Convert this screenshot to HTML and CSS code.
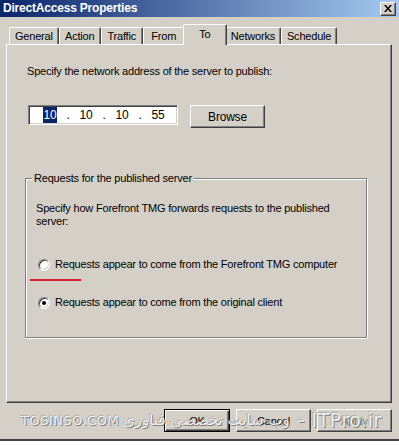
FILE: index.html
```html
<!DOCTYPE html>
<html lang="en">
<head>
    <meta charset="UTF-8">
    <meta name="viewport" content="width=device-width, initial-scale=1.0">
    <title>DirectAccess Properties</title>
    <link rel="stylesheet" href="styles.css">
</head>
<body>
    <div class="window">
        <div class="titlebar">
            <span class="title">DirectAccess Properties</span>
            <span class="close">
                <svg width="8" height="7" viewBox="0 0 8 7"><path d="M0 0h2l2 2.5L6 0h2L5 3.5 8 7H6L4 4.5 2 7H0l3-3.5z" fill="#000"/></svg>
            </span>
        </div>

        <ul class="tabs">
            <li class="tab">General</li>
            <li class="tab">Action</li>
            <li class="tab">Traffic</li>
            <li class="tab">From</li>
            <li class="tab active">To</li>
            <li class="tab">Networks</li>
            <li class="tab">Schedule</li>
        </ul>

        <div class="panel">
            <p class="prompt">Specify the network address of the server to publish:</p>

            <div class="address-row">
                <div class="ip-box">
                    <span class="octet"><span class="selected">10</span></span>
                    <span class="dot">.</span>
                    <span class="octet">10</span>
                    <span class="dot">.</span>
                    <span class="octet">10</span>
                    <span class="dot">.</span>
                    <span class="octet">55</span>
                </div>
                <button class="btn browse">Browse</button>
            </div>

            <div class="group">
                <span class="group-title">Requests for the published server</span>
                <p class="group-text">Specify how Forefront TMG forwards requests to the published<br>server:</p>

                <div class="radio">
                    <span class="radio-circle"></span>
                    <span>Requests appear to come from the Forefront TMG computer</span>
                </div>
                <div class="red-mark"></div>
                <div class="radio">
                    <span class="radio-circle checked"></span>
                    <span>Requests appear to come from the original client</span>
                </div>
            </div>
        </div>

        <div class="buttons">
            <button class="btn ok">OK</button>
            <button class="btn cancel">Cancel</button>
            <button class="btn apply">Apply</button>
        </div>

        <div class="footer"></div>

        <!-- watermark printed over the screenshot -->
        <div class="watermark">
            <span class="wm-site">TOSINSO.COM</span>
            <span class="wm-fa" dir="rtl">وب سایت تخصصی فناوری</span>
            <span class="wm-site big">- ITPro.ir</span>
        </div>
    </div>
</body>
</html>
```

FILE: styles.css
```css
* {
    box-sizing: border-box;
}

body {
    margin: 0;
    font-family: "Liberation Sans", Arial, sans-serif;
    font-size: 11px;
    letter-spacing: -0.2px;
    color: #000;
}

.window {
    position: relative;
    width: 399px;
    height: 446px;
    overflow: hidden;
    background: #d4d0c8;
}

/* title bar */
.titlebar {
    display: flex;
    align-items: center;
    justify-content: space-between;
    height: 17px;
    padding: 0 3px 1px 3px;
    background: linear-gradient(to right, #0a246a, #a6caf0);
}

.title {
    color: #fff;
    font-weight: bold;
    font-size: 12px;
}

.close {
    display: flex;
    align-items: center;
    justify-content: center;
    width: 16px;
    height: 14px;
    margin-top: 1px;
    background: #d4d0c8;
    border: 1px solid;
    border-color: #fff #404040 #404040 #fff;
    box-shadow: inset -1px -1px 0 #808080;
}

/* tabs */
.tabs {
    display: flex;
    align-items: flex-end;
    height: 27px;
    margin: 0;
    padding: 0 0 0 9px;
    list-style-type: none;
}

.tab {
    position: relative;
    min-width: 42px;
    height: 17px;
    padding: 2px 5px 0 5px;
    text-align: center;
    border: 1px solid;
    border-bottom: none;
    border-color: #fff #404040 transparent #fff;
    border-radius: 2px 2px 0 0;
    box-shadow: inset -1px 0 0 #808080;
}

.tab.active {
    z-index: 2;
    height: 21px;
    min-width: 44px;
    margin: 0 -2px -1px -2px;
    padding: 3px 6px 0 6px;
    background: #d4d0c8;
}

/* main page */
.panel {
    width: 386px;
    height: 359px;
    margin-left: 6px;
    padding: 0 0 0 19px;
    border: 1px solid;
    border-color: #fff #404040 #404040 #fff;
    box-shadow: inset -1px -1px 0 #808080;
}

.prompt {
    margin: 20px 0 0 1px;
    line-height: 13px;
}

.address-row {
    display: flex;
    align-items: flex-start;
    margin-top: 27px;
}

.ip-box {
    display: flex;
    align-items: center;
    width: 150px;
    height: 20px;
    margin-left: 2px;
    padding-left: 13px;
    background: #fff;
    border: 1px solid;
    border-color: #808080 #fff #fff #808080;
    box-shadow: inset 1px 1px 0 #404040, inset -1px -1px 0 #d4d0c8;
    font-size: 12px;
}

.octet {
    width: 16px;
    text-align: center;
}

.octet .selected {
    padding: 1px 1px;
    background: #0a246a;
    color: #fff;
}

.dot {
    width: 20px;
    text-align: center;
}

.btn {
    height: 23px;
    padding: 0;
    font-family: "Liberation Sans", Arial, sans-serif;
    font-size: 11px;
    letter-spacing: -0.2px;
    color: #000;
    background: #d4d0c8;
    border: 1px solid;
    border-color: #fff #404040 #404040 #fff;
    box-shadow: inset -1px -1px 0 #808080;
}

.browse {
    width: 75px;
    margin-left: 12px;
    font-size: 12px;
}

/* group box */
.group {
    position: relative;
    width: 342px;
    height: 160px;
    margin-top: 50px;
    margin-left: -1px;
    padding: 23px 0 0 10px;
    border: 1px solid #808080;
    box-shadow: inset 1px 1px 0 #fff, 1px 1px 0 #fff;
}

.group-title {
    position: absolute;
    top: -7px;
    left: 6px;
    padding: 0 2px;
    background: #d4d0c8;
    line-height: 13px;
}

.group-text {
    margin: 0;
    line-height: 13px;
}

.radio {
    display: flex;
    align-items: center;
    gap: 5px;
    margin-left: 2px;
    line-height: 13px;
}

.radio:first-of-type {
    margin-top: 30px;
}

.radio-circle {
    position: relative;
    width: 12px;
    height: 12px;
    background: #fff;
    border: 1px solid;
    border-color: #808080 #fff #fff #808080;
    border-radius: 50%;
    box-shadow: inset 1px 1px 0 #404040, inset -1px -1px 0 #d4d0c8;
}

.radio-circle.checked::after {
    content: "";
    position: absolute;
    top: 3px;
    left: 3px;
    width: 4px;
    height: 4px;
    border-radius: 50%;
    background: #000;
}

.red-mark {
    width: 51px;
    height: 2px;
    margin: 8px 0 15px -6px;
    background: #d7212c;
}

/* bottom buttons */
.buttons {
    display: flex;
    justify-content: flex-end;
    gap: 6px;
    height: 23px;
    margin-top: 6px;
    padding-right: 7px;
}

.ok {
    width: 66px;
    border: 1px solid #000;
    box-shadow: inset 1px 1px 0 #fff, inset -1px -1px 0 #404040, inset -2px -2px 0 #808080;
}

.cancel {
    width: 75px;
}

.apply {
    width: 75px;
    color: #808080;
}

.footer {
    height: 8px;
    margin-top: 7px;
    border-top: 2px solid #404040;
    background: #fff;
}

/* overlaid watermark */
.watermark {
    position: absolute;
    left: 21px;
    top: 409px;
    display: flex;
    align-items: center;
    gap: 4px;
    color: rgba(255, 255, 255, 0.85);
    letter-spacing: 0;
    text-shadow: 1px 1px 0 rgba(90, 90, 90, 0.7), -1px -1px 0 rgba(140, 140, 140, 0.5);
    pointer-events: none;
}

.wm-site {
    font-family: "DejaVu Sans", sans-serif;
    font-size: 13px;
    letter-spacing: 0.5px;
}

.wm-site.big {
    font-size: 19px;
    margin-left: 4px;
}

.wm-fa {
    font-family: "DejaVu Sans", sans-serif;
    font-size: 15px;
}
```
